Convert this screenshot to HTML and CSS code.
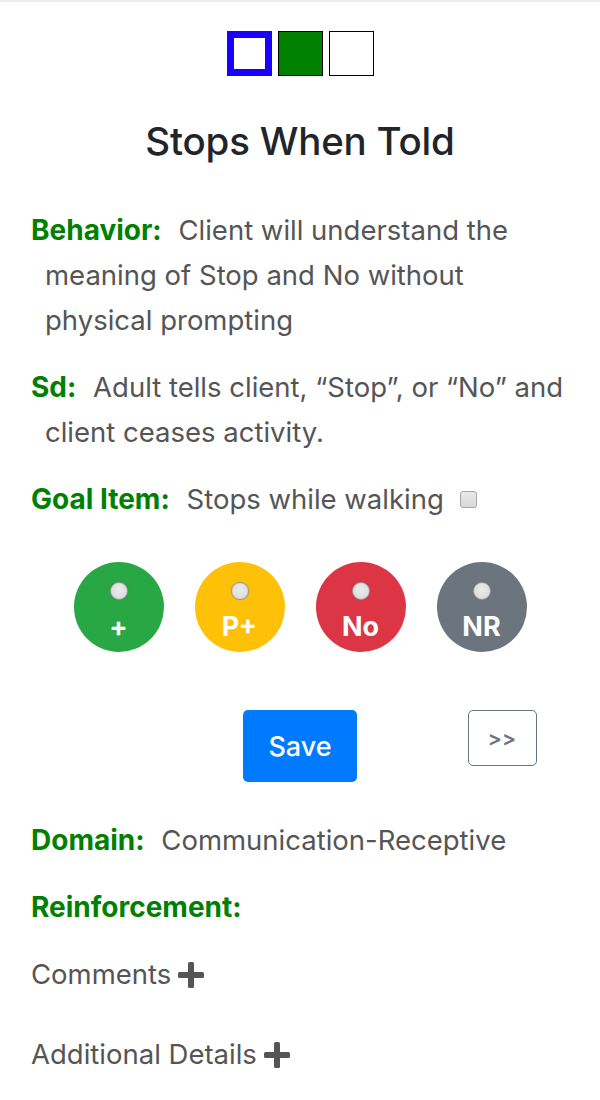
FILE: index.html
```html
<!DOCTYPE html>
<html>
<head>
<meta charset="utf-8">
<link rel="stylesheet" href="styles.css">
</head>
<body>
<div class="page">
  <div class="squares">
    <span class="sq sq-blue"></span>
    <span class="sq sq-green"></span>
    <span class="sq sq-white"></span>
  </div>
  <h1 class="title">Stops When Told</h1>
  <div class="info">
    <p class="field"><span class="label">Behavior:</span> <span class="value">Client will understand the meaning of Stop and No without physical prompting</span></p>
    <p class="field"><span class="label">Sd:</span> <span class="value">Adult tells client, “Stop”, or “No” and client ceases activity.</span></p>
    <p class="field"><span class="label">Goal Item:</span> <span class="value">Stops while walking</span><input type="checkbox" class="check"></p>
  </div>
  <div class="choices">
    <label class="choice c-green"><input type="radio" name="r" class="radio"><span>+</span></label>
    <label class="choice c-yellow"><input type="radio" name="r" class="radio"><span>P+</span></label>
    <label class="choice c-red"><input type="radio" name="r" class="radio"><span>No</span></label>
    <label class="choice c-gray"><input type="radio" name="r" class="radio"><span>NR</span></label>
  </div>
  <div class="actions">
    <div></div>
    <button class="btn-save">Save</button>
    <button class="btn-next">&gt;&gt;</button>
  </div>
  <div class="info lower">
    <p class="field"><span class="label">Domain:</span> <span class="value">Communication-Receptive</span></p>
    <p class="field"><span class="label">Reinforcement:</span></p>
    <p class="toggle">Comments<svg class="plus" width="26" height="26" viewBox="0 0 26 26"><rect x="10" y="0" width="6" height="26" rx="1.5"/><rect x="0" y="10" width="26" height="6" rx="1.5"/></svg></p>
    <p class="toggle">Additional Details<svg class="plus" width="26" height="26" viewBox="0 0 26 26"><rect x="10" y="0" width="6" height="26" rx="1.5"/><rect x="0" y="10" width="26" height="6" rx="1.5"/></svg></p>
  </div>
</div>
</body>
</html>
```

FILE: styles.css
```css
html, body {
  margin: 0;
  padding: 0;
  background: #fff;
}
body {
  font-family: Inter, "Liberation Sans", sans-serif;
  color: #555;
  border-top: 2px solid #eeeeee;
}
.page {
  width: 600px;
}
.squares {
  display: flex;
  justify-content: center;
  gap: 6px;
  margin-top: 29px;
}
.sq {
  display: block;
  width: 45px;
  height: 45px;
  box-sizing: border-box;
}
.sq-blue {
  border: 7px solid #1a00ff;
}
.sq-green {
  background: #008000;
  border: 1px solid #000;
}
.sq-white {
  background: #fff;
  border: 1px solid #000;
}
.title {
  text-align: center;
  font-size: 38.5px;
  font-weight: 500;
  color: #212529;
  letter-spacing: -0.2px;
  margin: 43px 0 45px;
  line-height: 44px;
}
.info {
  padding: 0 30px 0 31px;
}
.field {
  margin: 0 0 22px;
  font-size: 27.5px;
  line-height: 45px;
  padding-left: 14px;
  text-indent: -14px;
}
.label {
  color: #008000;
  font-weight: 700;
  font-size: 28px;
  margin-right: 9px;
}
.check {
  -webkit-appearance: none;
  appearance: none;
  box-sizing: border-box;
  width: 17px;
  height: 17px;
  margin: 0 0 0 16px;
  vertical-align: 1px;
  border: 1px solid #a6a6a6;
  border-radius: 3px;
  background: linear-gradient(#e9e9e9, #d9d9d9);
}
.choices {
  display: flex;
  justify-content: center;
  gap: 31px;
  margin-top: 40px;
}
.choice {
  width: 90px;
  height: 90px;
  border-radius: 50%;
  display: flex;
  flex-direction: column;
  align-items: center;
  color: #fff;
  font-weight: 700;
  font-size: 27px;
}
.radio {
  -webkit-appearance: none;
  appearance: none;
  box-sizing: border-box;
  width: 18px;
  height: 18px;
  margin: 20px 0 0;
  border-radius: 50%;
  border: 1px solid #9a9a9a;
  background: radial-gradient(circle at 50% 40%, #ececec, #d6d6d6);
  box-shadow: 0 0 1px rgba(0,0,0,0.3);
}
.choice span {
  margin-top: 11px;
  line-height: 32px;
}
.c-green { background: #28a745; }
.c-yellow { background: #ffc107; }
.c-red { background: #dc3545; }
.c-gray { background: #6c757d; }
.actions {
  display: grid;
  grid-template-columns: 1fr 1fr 1fr;
  justify-items: center;
  align-items: start;
  margin-top: 58px;
}
.btn-save {
  width: 114px;
  height: 72px;
  background: #007bff;
  color: #fff;
  border: 0;
  border-radius: 5px;
  font-family: inherit;
  font-size: 27px;
  font-weight: 500;
}
.btn-next {
  width: 69px;
  height: 56px;
  background: #fff;
  color: #6c757d;
  border: 1.5px solid #6c757d;
  border-radius: 5px;
  font-family: inherit;
  font-size: 21px;
  font-weight: 600;
  margin-left: 4px;
}
.lower {
  margin-top: 36px;
}
.toggle {
  margin: 0 0 35px;
  font-size: 27.5px;
  line-height: 45px;
  display: flex;
  align-items: center;
  gap: 7px;
}
.plus {
  fill: #555;
}
```
